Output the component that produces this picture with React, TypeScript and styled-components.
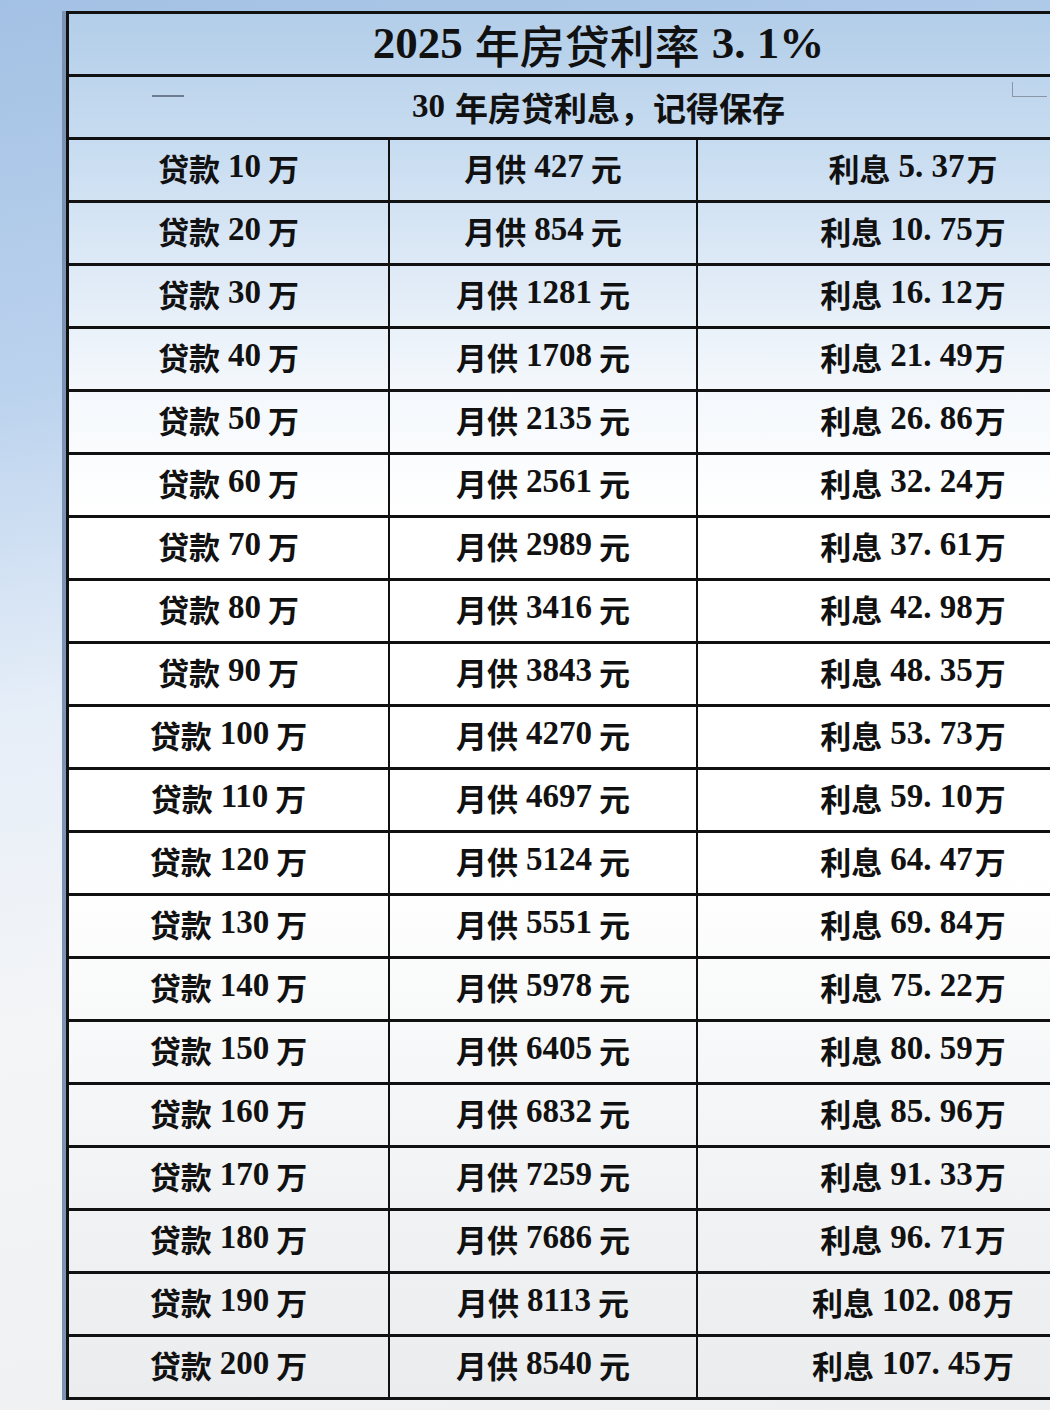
import styled, { createGlobalStyle } from "styled-components";

const GlobalStyle = createGlobalStyle`
  html, body {
    margin: 0;
    padding: 0;
  }
  body {
    width: 1050px;
    min-height: 1410px;
    overflow: hidden;
    background: linear-gradient(170deg, #a3c1e4 0%, #bcd3ee 25%, #e6eef8 45%, #f4f5f7 65%, #eeeff1 100%);
    font-family: "Liberation Serif", "Noto Sans CJK SC", serif;
  }
`;

const Page = styled.div`
  width: 1050px;
  height: 1410px;
  overflow: hidden;
  padding: 11px 0 0 62px;
  box-sizing: border-box;
`;

const Frame = styled.div`
  width: 1062px;
  border-left: 4px solid #7d93b3;
`;

const Table = styled.div`
  position: relative;
  border-left: 3px solid #111;
  border-top: 3px solid #111;
  background: linear-gradient(
    to bottom,
    #b3cee9 0%,
    #c9ddf1 10%,
    #dde9f6 18%,
    #f4f8fc 27%,
    #ffffff 36%,
    #ffffff 62%,
    #f5f6f7 78%,
    #eaecee 100%
  );
  color: #111;
`;

const Banner = styled.div<{ size: number; weight: number }>`
  height: 60px;
  border-bottom: 3px solid #111;
  display: flex;
  align-items: center;
  justify-content: center;
  font-size: ${(p) => p.size}px;
  font-weight: ${(p) => p.weight};
`;

const Grid = styled.div`
  display: grid;
  grid-template-columns: 321px 308px 1fr;
`;

const Cell = styled.div<{ last?: boolean }>`
  height: 63px;
  box-sizing: border-box;
  padding-bottom: 6px;
  border-bottom: 3px solid #111;
  border-right: ${(p) => (p.last ? "none" : "2px solid #111")};
  display: flex;
  align-items: center;
  justify-content: center;
  font-size: 31px;
  font-weight: 700;
  white-space: nowrap;
`;

const Han = styled.span`
  font-family: "Noto Sans CJK SC", sans-serif;
`;

const Num = styled.span<{ l?: number; r?: number; heavy?: boolean; size?: number }>`
  font-family: "Liberation Serif", serif;
  font-size: ${(p) => (p.size ? `${p.size}px` : "inherit")};
  margin-left: ${(p) => p.l ?? 0}px;
  margin-right: ${(p) => p.r ?? 0}px;
  font-weight: ${(p) => (p.heavy ? 700 : "inherit")};
  position: relative;
  top: -1px;
`;

const Mark = styled.span<{ left: number; top: number; w: number }>`
  position: absolute;
  left: ${(p) => p.left}px;
  top: ${(p) => p.top}px;
  width: ${(p) => p.w}px;
  height: 2px;
  background: #4a5566;
  opacity: 0.7;
`;

const Corner = styled.span`
  position: absolute;
  left: 943px;
  top: 68px;
  width: 34px;
  height: 14px;
  border-left: 1px solid #8a96a6;
  border-bottom: 1px solid #8a96a6;
`;

const rows: [string, string, string][] = [
  ["10", "427", "5. 37"],
  ["20", "854", "10. 75"],
  ["30", "1281", "16. 12"],
  ["40", "1708", "21. 49"],
  ["50", "2135", "26. 86"],
  ["60", "2561", "32. 24"],
  ["70", "2989", "37. 61"],
  ["80", "3416", "42. 98"],
  ["90", "3843", "48. 35"],
  ["100", "4270", "53. 73"],
  ["110", "4697", "59. 10"],
  ["120", "5124", "64. 47"],
  ["130", "5551", "69. 84"],
  ["140", "5978", "75. 22"],
  ["150", "6405", "80. 59"],
  ["160", "6832", "85. 96"],
  ["170", "7259", "91. 33"],
  ["180", "7686", "96. 71"],
  ["190", "8113", "102. 08"],
  ["200", "8540", "107. 45"],
];

export default function App() {
  return (
    <>
      <GlobalStyle />
      <Page>
        <Frame>
          <Table>
            <Banner size={45} weight={500}>
              <Num r={12} heavy>2025</Num>
              <Han>年房贷利率</Han>
              <Num l={12} heavy>3. 1%</Num>
            </Banner>
            <Banner size={33} weight={700}>
              <Num r={10}>30</Num>
              <Han>年房贷利息，记得保存</Han>
            </Banner>
            <Mark left={83} top={81} w={32} />
            <Corner />
            <Grid>
              {rows.map(([loan, monthly, interest]) => (
                <>
                  <Cell key={loan + "a"}>
                    <Han>贷款</Han>
                    <Num l={8} r={7} size={33}>{loan}</Num>
                    <Han>万</Han>
                  </Cell>
                  <Cell key={loan + "b"}>
                    <Han>月供</Han>
                    <Num l={8} r={7} size={33}>{monthly}</Num>
                    <Han>元</Han>
                  </Cell>
                  <Cell key={loan + "c"} last>
                    <Han>利息</Han>
                    <Num l={8} r={2} size={33}>{interest}</Num>
                    <Han>万</Han>
                  </Cell>
                </>
              ))}
            </Grid>
          </Table>
        </Frame>
      </Page>
    </>
  );
}
